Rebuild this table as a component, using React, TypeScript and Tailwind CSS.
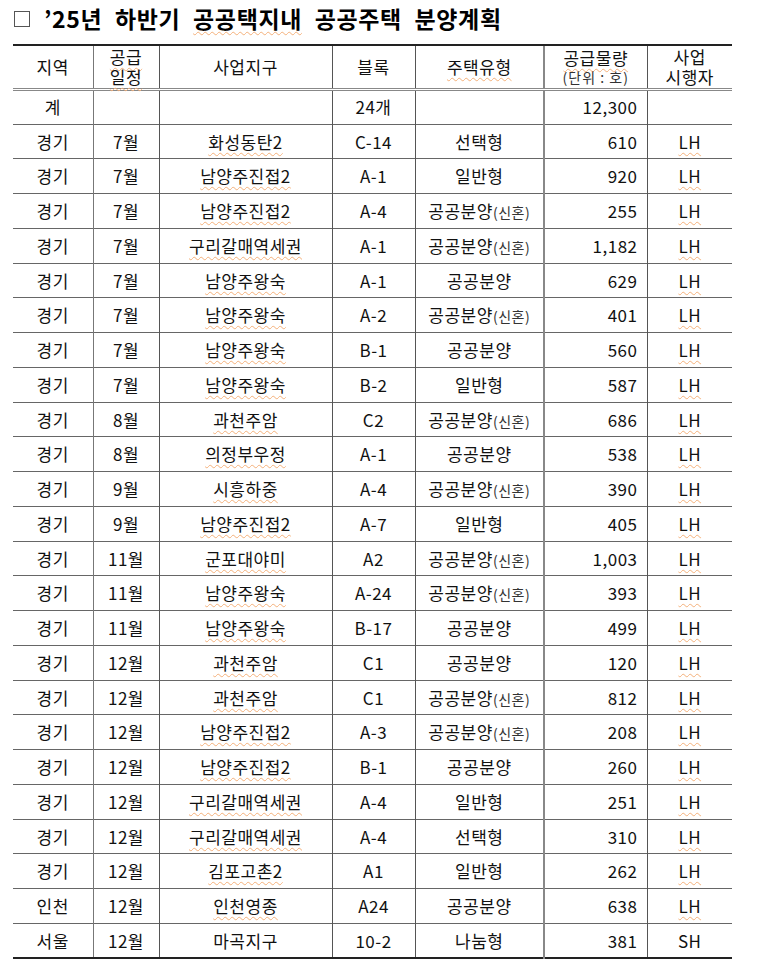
import React from 'react';

interface Row {
  region: string;
  month: string;
  site: string;
  block: string;
  kind: string;
  newlywed?: boolean;
  units: string;
  agency: string;
}

const rows: Row[] = [
  { region: '경기', month: '7월', site: '화성동탄2', block: 'C-14', kind: '선택형', units: '610', agency: 'LH' },
  { region: '경기', month: '7월', site: '남양주진접2', block: 'A-1', kind: '일반형', units: '920', agency: 'LH' },
  { region: '경기', month: '7월', site: '남양주진접2', block: 'A-4', kind: '공공분양', newlywed: true, units: '255', agency: 'LH' },
  { region: '경기', month: '7월', site: '구리갈매역세권', block: 'A-1', kind: '공공분양', newlywed: true, units: '1,182', agency: 'LH' },
  { region: '경기', month: '7월', site: '남양주왕숙', block: 'A-1', kind: '공공분양', units: '629', agency: 'LH' },
  { region: '경기', month: '7월', site: '남양주왕숙', block: 'A-2', kind: '공공분양', newlywed: true, units: '401', agency: 'LH' },
  { region: '경기', month: '7월', site: '남양주왕숙', block: 'B-1', kind: '공공분양', units: '560', agency: 'LH' },
  { region: '경기', month: '7월', site: '남양주왕숙', block: 'B-2', kind: '일반형', units: '587', agency: 'LH' },
  { region: '경기', month: '8월', site: '과천주암', block: 'C2', kind: '공공분양', newlywed: true, units: '686', agency: 'LH' },
  { region: '경기', month: '8월', site: '의정부우정', block: 'A-1', kind: '공공분양', units: '538', agency: 'LH' },
  { region: '경기', month: '9월', site: '시흥하중', block: 'A-4', kind: '공공분양', newlywed: true, units: '390', agency: 'LH' },
  { region: '경기', month: '9월', site: '남양주진접2', block: 'A-7', kind: '일반형', units: '405', agency: 'LH' },
  { region: '경기', month: '11월', site: '군포대야미', block: 'A2', kind: '공공분양', newlywed: true, units: '1,003', agency: 'LH' },
  { region: '경기', month: '11월', site: '남양주왕숙', block: 'A-24', kind: '공공분양', newlywed: true, units: '393', agency: 'LH' },
  { region: '경기', month: '11월', site: '남양주왕숙', block: 'B-17', kind: '공공분양', units: '499', agency: 'LH' },
  { region: '경기', month: '12월', site: '과천주암', block: 'C1', kind: '공공분양', units: '120', agency: 'LH' },
  { region: '경기', month: '12월', site: '과천주암', block: 'C1', kind: '공공분양', newlywed: true, units: '812', agency: 'LH' },
  { region: '경기', month: '12월', site: '남양주진접2', block: 'A-3', kind: '공공분양', newlywed: true, units: '208', agency: 'LH' },
  { region: '경기', month: '12월', site: '남양주진접2', block: 'B-1', kind: '공공분양', units: '260', agency: 'LH' },
  { region: '경기', month: '12월', site: '구리갈매역세권', block: 'A-4', kind: '일반형', units: '251', agency: 'LH' },
  { region: '경기', month: '12월', site: '구리갈매역세권', block: 'A-4', kind: '선택형', units: '310', agency: 'LH' },
  { region: '경기', month: '12월', site: '김포고촌2', block: 'A1', kind: '일반형', units: '262', agency: 'LH' },
  { region: '인천', month: '12월', site: '인천영종', block: 'A24', kind: '공공분양', units: '638', agency: 'LH' },
  { region: '서울', month: '12월', site: '마곡지구', block: '10-2', kind: '나눔형', units: '381', agency: 'SH' },
];

// spell-check style squiggle seen in the source document
const squiggle = 'underline decoration-wavy decoration-[#f4b07a] decoration-1 underline-offset-[3px]';

const cell = 'border-l border-[#555] px-0 text-center align-middle';

export default function App() {
  return (
    <div
      className="w-[760px] h-[964px] bg-white text-[#111] overflow-hidden"
      style={{ fontFamily: '"Noto Sans CJK KR", "Noto Sans", sans-serif' }}
    >
      <div className="flex items-center h-[37px] pl-[14px]">
        <span className="w-[16px] h-[16px] border border-[#555] bg-white" />
        <h1 className="ml-[14px] text-[23px] font-bold tracking-[0.6px] [word-spacing:7px] leading-none text-black">
          ’25년 하반기 <span className={squiggle}>공공택지내</span> 공공주택 분양계획
        </h1>
      </div>

      <table className="mt-[7px] ml-[13px] w-[719px] table-fixed border-collapse text-[17px] tracking-[0.5px]">
        <colgroup>
          <col className="w-[80px]" />
          <col className="w-[66px]" />
          <col className="w-[173px]" />
          <col className="w-[83px]" />
          <col className="w-[129px]" />
          <col className="w-[103px]" />
          <col className="w-[85px]" />
        </colgroup>
        <thead>
          <tr className="h-[44px] border-t-2 border-b-[3px] border-b-[#888] border-double border-t-[#222]">
            <th className="font-normal text-center align-middle">지역</th>
            <th className={`${cell} font-normal border-[#777]`}>
              <div className="h-[20px] leading-[20px]">
                <span className={squiggle}>공급</span>
              </div>
              <div className="h-[20px] leading-[20px]">
                <span className={squiggle}>일정</span>
              </div>
            </th>
            <th className={`${cell} font-normal`}>사업지구</th>
            <th className={`${cell} font-normal`}>블록</th>
            <th className={`${cell} font-normal`}>
              <span className={squiggle}>주택유형</span>
            </th>
            <th className={`${cell} font-normal border-l-2 border-[#888]`}>
              <div className="h-[21px] leading-[21px]">
                <span className={squiggle}>공급물량</span>
              </div>
              <div className="h-[19px] leading-[19px] text-[14px] text-[#333] tracking-[1px]">(단위 : 호)</div>
            </th>
            <th className={`${cell} font-normal`}>
              <div className="h-[20px] leading-[20px]">사업</div>
              <div className="h-[20px] leading-[20px]">시행자</div>
            </th>
          </tr>
        </thead>
        <tbody>
          <tr className="h-[35px] border-b border-[#666]">
            <td className="text-center align-middle">계</td>
            <td className={`${cell} border-[#777]`} />
            <td className={cell} />
            <td className={cell}>24개</td>
            <td className={cell} />
            <td className={`${cell} border-l-2 border-[#888] text-right pr-[9px]`}>12,300</td>
            <td className={cell} />
          </tr>
          {rows.map((r, i) => (
            <tr
              key={i}
              className={`h-[34.75px] ${i === rows.length - 1 ? 'border-b-2 border-[#222]' : 'border-b border-[#666]'}`}
            >
              <td className="text-center align-middle">{r.region}</td>
              <td className={`${cell} border-[#777]`}>{r.month}</td>
              <td className={cell}>
                <span className={r.site === '마곡지구' ? '' : squiggle}>{r.site}</span>
              </td>
              <td className={cell}>{r.block}</td>
              <td className={`${cell} whitespace-nowrap`}>
                {r.kind}
                {r.newlywed && <span className="text-[14px] tracking-[0.5px] text-[#333]">(신혼)</span>}
              </td>
              <td className={`${cell} border-l-2 border-[#888] text-right pr-[9px]`}>{r.units}</td>
              <td className={cell}>
                <span className={r.agency === 'LH' ? squiggle : ''}>{r.agency}</span>
              </td>
            </tr>
          ))}
        </tbody>
      </table>
    </div>
  );
}
